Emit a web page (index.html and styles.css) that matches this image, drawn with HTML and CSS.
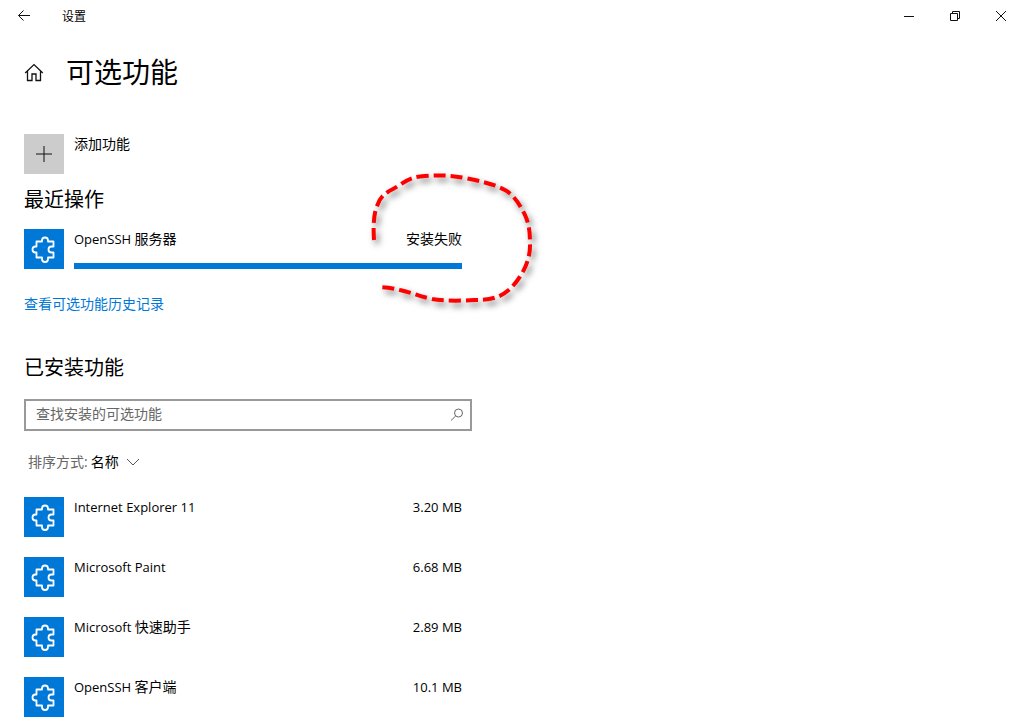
FILE: index.html
```html
<!DOCTYPE html>
<html lang="zh-CN">
<head>
<meta charset="utf-8">
<title>设置</title>
<meta name="viewport" content="width=device-width, initial-scale=1">
<link rel="stylesheet" href="styles.css">
</head>
<body>
<svg class="defs" aria-hidden="true">
  <symbol id="puzzle" viewBox="0 0 40 40">
    <path d="M12.500 12.500H18V11.500a3 3 0 0 1 6 0v1H29.500v5h-2a3 3 0 0 0 0 6h2v5H24v1.500a3 3 0 0 1-6 0v-1.500h-5.500v-5h-1a3 3 0 0 1 0-6h1z" fill="none" stroke="#fff" stroke-width="1.8" stroke-linejoin="round"/>
  </symbol>
</svg>
<header class="titlebar">
  <button class="back" aria-label="返回">
    <svg width="14" height="12" viewBox="0 0 14 12"><path d="M13 5.500H1.500M6.500 .500l-5 5 5 5"/></svg>
  </button>
  <span class="title">设置</span>
  <div class="controls">
    <button aria-label="最小化"><svg width="10" height="10" viewBox="0 0 10 10"><path d="M0 5.500h10"/></svg></button>
    <button aria-label="还原"><svg width="10" height="10" viewBox="0 0 10 10"><path d="M.5 2.500h7v7h-7zM2.500 2.500v-2h7v7h-2"/></svg></button>
    <button aria-label="关闭"><svg width="10" height="10" viewBox="0 0 10 10"><path d="M0 0l10 10M10 0L0 10"/></svg></button>
  </div>
</header>
<main class="page">
  <div class="heading">
    <button class="home" aria-label="主页">
      <svg width="20" height="20" viewBox="0 0 20 20"><path d="M1.200 11L10 2.600l8.800 8.400M3.500 9V18.500H8v-6.500h4v6.500h4.500V9" stroke-width="1.3"/></svg>
    </button>
    <h1>可选功能</h1>
  </div>
  <button class="add">
    <span class="tile tile-add"><svg width="16" height="16" viewBox="0 0 16 16"><path d="M0 8h16M8 0v16"/></svg></span>
    <span class="name">添加功能</span>
  </button>
  <section>
    <h2>最近操作</h2>
    <div class="row recent">
      <svg class="tile" aria-hidden="true"><use href="#puzzle"/></svg>
      <div class="body">
        <div class="line"><span id="recent-name">OpenSSH <span class="han">服务器</span></span><span class="status">安装失败
          <svg class="annotation" width="180" height="148" viewBox="362 166 180 148" aria-hidden="true">
            <path d="M374 240C373 225 374 213 377 206C380 197 385 193 393 189C402 184 408 178 420 176.500C435 175 450 175 462 177.500C480 181 494 184 505 190C514 195 520 205 525 215C530 226 530 236 530 246C530 262 521 278 510 289C500 298 490 300 474 300C460 301 443 301 432 299C418 296 410 292 400 290Q390 287.500 380 287"/>
          </svg></span></div>
        <progress value="100" max="100" aria-labelledby="recent-name"></progress>
      </div>
    </div>
    <a class="history" href="#history">查看可选功能历史记录</a>
  </section>
  <section>
    <h2 class="installed">已安装功能</h2>
    <label class="search">
      <input type="text" placeholder="查找安装的可选功能" aria-label="查找安装的可选功能">
      <svg width="14" height="14" viewBox="0 0 14 14" aria-hidden="true"><circle cx="8.500" cy="5" r="4"/><path d="M5.600 8L1 12.500"/></svg>
    </label>
    <div class="sort">
      <label for="sort">排序方式:</label>
      <span class="pick">
        <select id="sort"><option>名称</option></select>
        <svg width="14" height="8" viewBox="0 0 14 8" aria-hidden="true"><path d="M1 1l6 6 6-6"/></svg>
      </span>
    </div>
    <ul class="list">
      <li class="row"><svg class="tile" aria-hidden="true"><use href="#puzzle"/></svg><div class="line"><span>Internet Explorer 11</span><span>3.20 MB</span></div></li>
      <li class="row"><svg class="tile" aria-hidden="true"><use href="#puzzle"/></svg><div class="line"><span>Microsoft Paint</span><span>6.68 MB</span></div></li>
      <li class="row"><svg class="tile" aria-hidden="true"><use href="#puzzle"/></svg><div class="line"><span>Microsoft <span class="han">快速助手</span></span><span>2.89 MB</span></div></li>
      <li class="row"><svg class="tile" aria-hidden="true"><use href="#puzzle"/></svg><div class="line"><span>OpenSSH <span class="han">客户端</span></span><span>10.1 MB</span></div></li>
    </ul>
  </section>
</main>
</body>
</html>
```
FILE: styles.css
```css
* { box-sizing: border-box; }

body {
  margin: 0;
  background: #fff;
  color: #000;
  font: 14px/20px "Open Sans", "Noto Sans CJK SC", sans-serif;
}

button, input, select {
  margin: 0;
  padding: 0;
  border: 0;
  background: none;
  color: inherit;
  font: inherit;
}

svg {
  display: block;
  flex: none;
  fill: none;
  stroke: #111;
}

h1, h2 { margin: 0; font-weight: 400; }

.defs { position: absolute; width: 0; height: 0; }

.titlebar {
  display: flex;
  align-items: center;
  height: 32px;
  font-size: 12px;
}

.back { display: grid; place-items: center; width: 48px; height: 32px; }
.title { padding: 2px 0 0 14px; }
.controls { display: flex; margin-left: auto; }
.controls button { display: grid; place-items: center; width: 46px; height: 32px; }

.page { padding: 20px 24px 0; }

.heading { display: flex; align-items: center; gap: 22px; height: 40px; }
.home { display: grid; }
h1 { font-size: 28px; line-height: 40px; }

.add { display: flex; gap: 10px; margin-top: 42px; text-align: left; }
.tile { width: 40px; height: 40px; background: #0078d7; flex: none; }
.tile-add { display: grid; place-items: center; background: #ccc; }

h2 { font-size: 20px; line-height: 28px; margin-top: 12px; }
h2.installed { margin-top: 40px; }

.row { display: flex; gap: 10px; max-width: 438px; }
.recent { margin-top: 15px; }
.body { flex: 1; display: flex; flex-direction: column; justify-content: space-between; }
.line { flex: 1; display: flex; justify-content: space-between; font-size: 13px; }
.line span { white-space: nowrap; }
.han, .status { font-size: 14px; }
.status { position: relative; }

.annotation {
  position: absolute;
  left: -44px;
  top: -63px;
  stroke: #f00;
  stroke-width: 4;
  stroke-dasharray: 12 5;
  filter: drop-shadow(3px 4px 3px rgba(0, 0, 0, 0.5));
  overflow: visible;
  pointer-events: none;
}

progress {
  appearance: none;
  display: block;
  width: 100%;
  height: 6px;
  border: 0;
  background: #ccc;
}
progress::-webkit-progress-bar { background: #ccc; }
progress::-webkit-progress-value { background: #0078d7; }

.history { display: inline-block; margin-top: 25px; color: #0078d7; text-decoration: none; }

.search {
  display: flex;
  align-items: center;
  max-width: 448px;
  height: 32px;
  margin-top: 17px;
  padding: 0 6px 0 10px;
  border: 2px solid #999;
}
.search input { flex: 1; min-width: 0; padding-bottom: 2px; outline: 0; }
.search input::placeholder { color: #666; opacity: 1; }
.search svg { stroke: #666; }

.sort { display: flex; gap: 3px; margin-top: 21px; padding-left: 4px; }
.sort label { color: #666; }
.pick { display: flex; align-items: center; gap: 7px; }
.pick select { appearance: none; }
.pick svg { stroke: #555; }

.list { display: grid; gap: 20px; margin: 25px 0 0; padding: 0 0 11px; list-style: none; }
```
